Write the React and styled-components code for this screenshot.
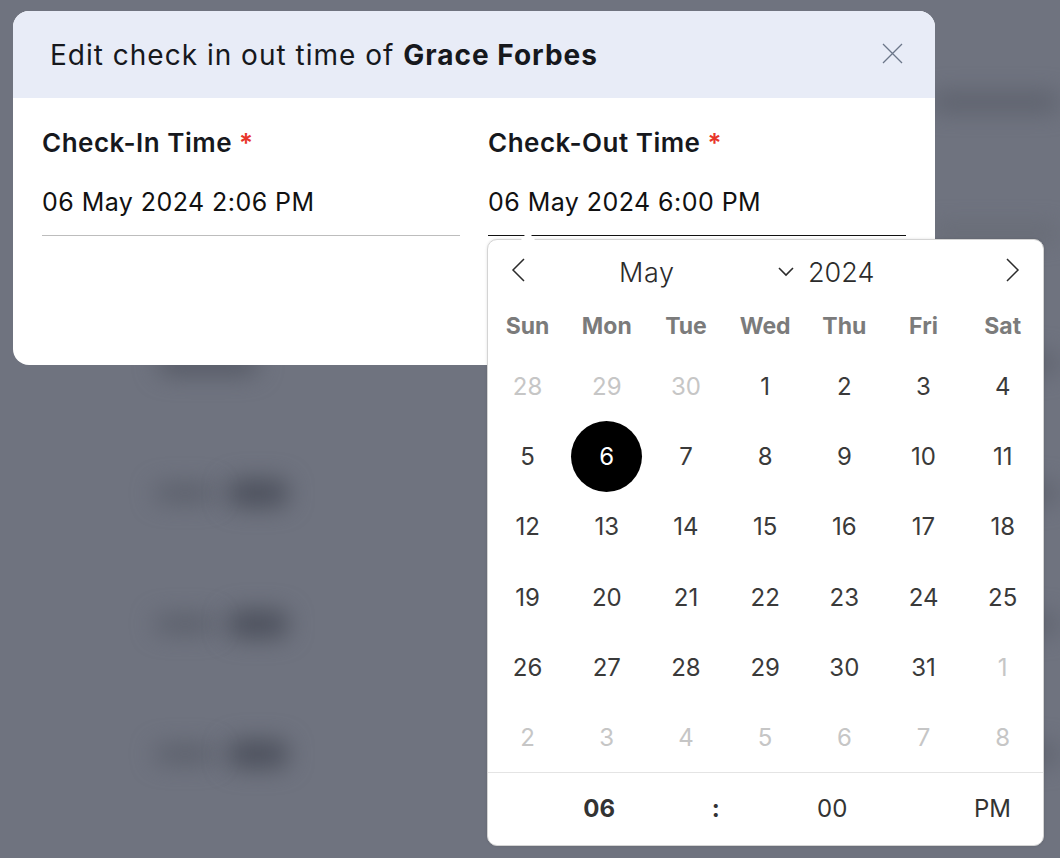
import styled, { createGlobalStyle } from 'styled-components';

const GlobalStyle = createGlobalStyle`
  html, body { margin: 0; padding: 0; height: 100%; overflow: hidden; background: #6f737f; }
  * { box-sizing: border-box; }
  body { font-family: Inter, "Noto Sans", sans-serif; }
`;

const Page = styled.div`
  position: relative;
  width: 1060px;
  height: 858px;
  overflow: hidden;
`;

// the table behind the modal, only visible as blurred smudges
const Backdrop = styled.div`
  display: flex;
  flex-direction: column;
  height: 100%;
  padding-top: 37px;
  background: #6f737f;
`;

const BackRow = styled.div`
  display: flex;
  align-items: center;
  flex: 0 0 130.4px;
`;

const Smudge = styled.div`
  flex: none;
  width: ${(p) => p.$w}px;
  height: ${(p) => p.$h || 20}px;
  margin-left: ${(p) => (p.$left === undefined ? 'auto' : `${p.$left}px`)};
  border-radius: 10px;
  background: ${(p) => p.$color || '#4a4e5a'};
  filter: blur(${(p) => p.$blur || 12}px);
`;

const Modal = styled.div`
  position: absolute;
  left: 13px;
  top: 11px;
  width: 922px;
  height: 354px;
  border-radius: 16px;
  background: #fff;
`;

const ModalHeader = styled.div`
  display: flex;
  align-items: center;
  justify-content: space-between;
  height: 87px;
  padding: 0 32px 0 37px;
  border-radius: 16px 16px 0 0;
  background: #e8ecf7;
`;

const Title = styled.h2`
  margin: 0;
  font-size: 28px;
  font-weight: 400;
  letter-spacing: 1px;
  color: #16181d;
  b { font-weight: 700; }
`;

const CloseButton = styled.button`
  display: flex;
  margin-top: -2px;
  padding: 0;
  border: 0;
  background: none;
  color: #6b7689;
`;

const Fields = styled.div`
  display: grid;
  grid-template-columns: 418px 418px;
  column-gap: 28px;
  padding: 29px 29px 0;
`;

const Field = styled.div`
  position: relative;
`;

const Label = styled.label`
  display: block;
  font-size: 26px;
  font-weight: 600;
  line-height: 32px;
  letter-spacing: 0.5px;
  color: #16181d;
  span { color: #e8352a; }
`;

const Value = styled.div`
  height: 77px;
  padding-top: 28px;
  font-size: 25px;
  line-height: 30px;
  letter-spacing: 0.45px;
  color: #111;
  border-bottom: 1px solid ${(p) => (p.$active ? '#111' : '#bdbdbd')};
`;

const Calendar = styled.div`
  position: absolute;
  left: -1px;
  top: 112px;
  width: 557px;
  height: 607px;
  border: 1px solid #d4d4d4;
  border-radius: 10px;
  background: #fff;
  color: #2b2b2b;
  box-shadow: 0 0 3px rgba(0, 0, 0, 0.12);
  &::before {
    content: '';
    position: absolute;
    left: 35px;
    top: -6px;
    width: 10px;
    height: 10px;
    background: #fff;
    transform: rotate(45deg);
  }
`;

const CalHeader = styled.div`
  position: relative;
  display: flex;
  align-items: center;
  height: 64px;
  padding: 0 22px;
`;

const NavIcon = styled.svg`
  flex: none;
  width: 16px;
  height: 26px;
  margin-top: -4px;
  fill: none;
  stroke: #2b2b2b;
  stroke-width: 1.5;
`;

const MonthSelect = styled.div`
  display: flex;
  align-items: center;
  justify-content: space-between;
  width: 175px;
  margin-left: 93px;
  font-size: 27px;
  font-weight: 300;
  letter-spacing: 0.7px;
`;

const YearText = styled.div`
  margin-left: 14px;
  margin-right: auto;
  font-size: 27px;
  font-weight: 300;
`;

const WeekGrid = styled.div`
  display: grid;
  grid-template-columns: repeat(7, 79.2px);
  height: 44px;
  align-items: center;
`;

const WeekDay = styled.div`
  text-align: center;
  font-size: 23px;
  font-weight: 700;
  color: #7b7b7b;
`;

const DayGrid = styled.div`
  display: grid;
  grid-template-columns: repeat(7, 79.2px);
  grid-auto-rows: 70.3px;
  margin-top: 3px;
  height: 421px;
`;

const Day = styled.div`
  display: flex;
  align-items: center;
  justify-content: center;
  font-size: 24px;
  font-weight: 400;
  color: ${(p) => (p.$muted ? '#c6c6c6' : '#3a3a3a')};
`;

const Selected = styled.span`
  display: flex;
  align-items: center;
  justify-content: center;
  flex: none;
  width: 71px;
  height: 71px;
  border-radius: 50%;
  background: #000;
  color: #fff;
`;

const TimeRow = styled.div`
  display: grid;
  grid-template-columns: 116.5px 116.5px 116.5px 1fr;
  align-items: center;
  height: 72px;
  padding: 0 32px 0 53px;
  border-top: 1px solid #e4e4e4;
  font-size: 24px;
  color: #333;
`;

const TimePart = styled.div`
  text-align: ${(p) => p.$align || 'center'};
  font-weight: ${(p) => (p.$bold ? 700 : 400)};
`;

const days = [
  [28, 1], [29, 1], [30, 1], [1], [2], [3], [4],
  [5], [6, 0, 1], [7], [8], [9], [10], [11],
  [12], [13], [14], [15], [16], [17], [18],
  [19], [20], [21], [22], [23], [24], [25],
  [26], [27], [28], [29], [30], [31], [1, 1],
  [2, 1], [3, 1], [4, 1], [5, 1], [6, 1], [7, 1], [8, 1],
];

const weekDays = ['Sun', 'Mon', 'Tue', 'Wed', 'Thu', 'Fri', 'Sat'];

const EmployeeRow = () => (
  <BackRow>
    <Smudge $left={155} $w={60} $h={16} $color="#585c68" />
    <Smudge $left={13} $w={60} $h={26} />
    <Smudge $w={40} $h={18} $color="#5c606c" />
  </BackRow>
);

export default function App() {
  return (
    <Page>
      <GlobalStyle />
      <Backdrop>
        <BackRow><Smudge $w={130} $h={14} $color="#565a66" /></BackRow>
        <BackRow><Smudge $w={130} $h={10} $color="#62666f" /></BackRow>
        <BackRow>
          <Smudge $left={158} $w={100} $h={22} $color="#545864" />
          <Smudge $w={40} $h={18} $color="#5c606c" />
        </BackRow>
        <EmployeeRow />
        <EmployeeRow />
        <EmployeeRow />
      </Backdrop>
      <Modal>
        <ModalHeader>
          <Title>Edit check in out time of <b>Grace Forbes</b></Title>
          <CloseButton>
            <svg width="21" height="21" viewBox="0 0 21 21" fill="none" stroke="currentColor" strokeWidth="1.3">
              <path d="M1 1l19 19M20 1L1 20" />
            </svg>
          </CloseButton>
        </ModalHeader>
        <Fields>
          <Field>
            <Label>Check-In Time <span>*</span></Label>
            <Value>06 May 2024 2:06 PM</Value>
          </Field>
          <Field>
            <Label>Check-Out Time <span>*</span></Label>
            <Value $active>06 May 2024 6:00 PM</Value>
            <Calendar>
              <CalHeader>
                <NavIcon viewBox="0 0 16 26"><path d="M14 2L3 13l11 11" /></NavIcon>
                <MonthSelect>
                  May
                  <svg width="16" height="10" viewBox="0 0 16 10" fill="none" stroke="#2b2b2b" strokeWidth="1.6">
                    <path d="M1 1l7 7 7-7" />
                  </svg>
                </MonthSelect>
                <YearText>2024</YearText>
                <NavIcon viewBox="0 0 16 26"><path d="M2 2l11 11L2 24" /></NavIcon>
              </CalHeader>
              <WeekGrid>
                {weekDays.map((d) => <WeekDay key={d}>{d}</WeekDay>)}
              </WeekGrid>
              <DayGrid>
                {days.map(([n, muted, sel], i) => (
                  <Day key={i} $muted={!!muted}>
                    {sel ? <Selected>{n}</Selected> : n}
                  </Day>
                ))}
              </DayGrid>
              <TimeRow>
                <TimePart $bold>06</TimePart>
                <TimePart $bold>:</TimePart>
                <TimePart>00</TimePart>
                <TimePart $align="right">PM</TimePart>
              </TimeRow>
            </Calendar>
          </Field>
        </Fields>
      </Modal>
    </Page>
  );
}
